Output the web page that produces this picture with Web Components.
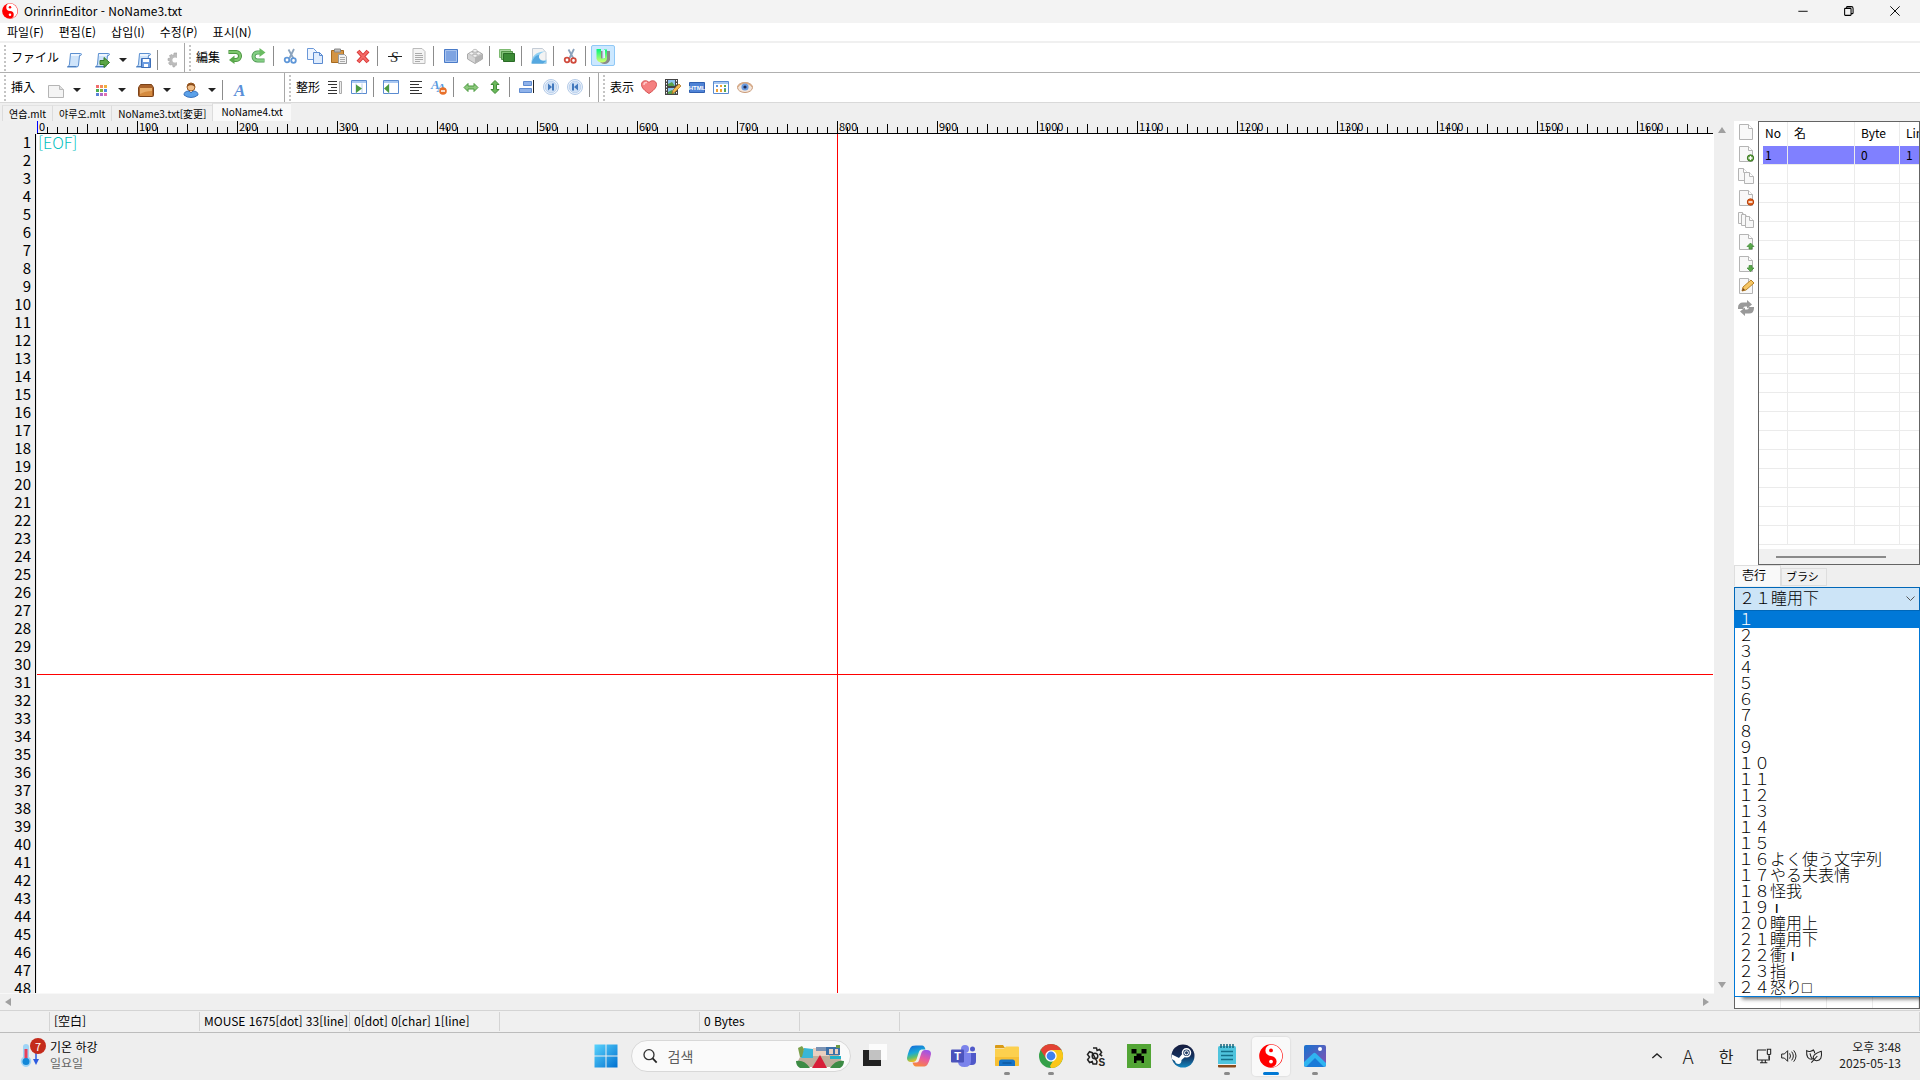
<!DOCTYPE html>
<html lang="ko">
<head>
<meta charset="utf-8">
<title>OrinrinEditor</title>
<style>
    html, body { height: 100%; }

    body {
        margin: 0;
        display: flex;
        flex-direction: column;
        overflow: hidden;
        background: #efefef;
        color: #000;
        font: 12px/16px "Noto Sans CJK KR", "Noto Sans", sans-serif;
    }

    .rebar-row {
        display: flex;
        height: 29px;
        background: #fff;
        border-bottom: 1px solid #b0b0b0;
    }

    .rebar-row.last { border-bottom-color: #d9d9d9; }

    main {
        flex: 1;
        min-height: 0;
        display: flex;
    }
</style>
</head>
<body>
    <title-bar caption="OrinrinEditor - NoName3.txt"></title-bar>
    <menu-bar items="파일(F),편집(E),삽입(I),수정(P),표시(N)"></menu-bar>

    <div class="rebar-row">
        <tool-band label="ファイル" style="width: 185px; --label: 51px; --drop: 4px">
            <tool-item icon="scroll"></tool-item>
            <tool-item icon="scrollGo" drop></tool-item>
            <tool-item icon="scrollSave"></tool-item>
            <tool-sep></tool-sep>
            <tool-item icon="gear" cut></tool-item>
        </tool-band>
        <tool-band label="編集" class="open" style="flex: 1; --label: 27px">
            <tool-item icon="undo"></tool-item>
            <tool-item icon="redo"></tool-item>
            <tool-sep></tool-sep>
            <tool-item icon="cut"></tool-item>
            <tool-item icon="copy"></tool-item>
            <tool-item icon="paste"></tool-item>
            <tool-item icon="del"></tool-item>
            <tool-sep></tool-sep>
            <tool-item icon="strike"></tool-item>
            <tool-item icon="page"></tool-item>
            <tool-sep></tool-sep>
            <tool-item icon="square"></tool-item>
            <tool-item icon="brick"></tool-item>
            <tool-sep></tool-sep>
            <tool-item icon="layers"></tool-item>
            <tool-sep></tool-sep>
            <tool-item icon="curl"></tool-item>
            <tool-sep></tool-sep>
            <tool-item icon="cutRed"></tool-item>
            <tool-sep></tool-sep>
            <tool-item icon="uni" on></tool-item>
        </tool-band>
    </div>

    <div class="rebar-row last">
        <tool-band label="挿入" style="width: 285px; --label: 29px; --drop: 4px">
            <tool-item icon="blank" drop></tool-item>
            <tool-item icon="dots" drop></tool-item>
            <tool-item icon="box" drop></tool-item>
            <tool-item icon="person" drop></tool-item>
            <tool-sep></tool-sep>
            <tool-item icon="fontA"></tool-item>
        </tool-band>
        <tool-band label="整形" style="width: 314px; --label: 27px; --drop: 1px">
            <tool-item icon="alignBar"></tool-item>
            <tool-item icon="panelR"></tool-item>
            <tool-sep></tool-sep>
            <tool-item icon="panelL"></tool-item>
            <tool-item icon="align"></tool-item>
            <tool-item icon="fontDel"></tool-item>
            <tool-sep></tool-sep>
            <tool-item icon="arrowH"></tool-item>
            <tool-item icon="arrowV"></tool-item>
            <tool-sep></tool-sep>
            <tool-item icon="alignRight"></tool-item>
            <tool-item icon="next"></tool-item>
            <tool-item icon="prev"></tool-item>
            <tool-sep></tool-sep>
        </tool-band>
        <tool-band label="表示" class="open" style="flex: 1; --label: 27px; --drop: 1px">
            <tool-item icon="heart"></tool-item>
            <tool-item icon="film"></tool-item>
            <tool-item icon="html"></tool-item>
            <tool-item icon="calendar"></tool-item>
            <tool-item icon="eye"></tool-item>
        </tool-band>
    </div>

    <file-tabs names="연습.mlt,야루오.mlt,NoName3.txt[変更],NoName4.txt" selected="3"></file-tabs>

    <main>
        <text-editor lines="48">[EOF]</text-editor>
        <side-panel>
            <page-list slot="pages"></page-list>
            <line-picker slot="picker"></line-picker>
        </side-panel>
    </main>

    <status-bar></status-bar>
    <task-bar></task-bar>

<script>
    // ---------- icons ----------
    const paper = (x, y, w, h) => `<path d="M${x} ${y}h${w - 4}l4 4v${h - 4}h-${w}z" fill="#f8f8f8" stroke="#b4b4b4"/><path d="M${x + w - 4} ${y}v4h4" fill="#fff" stroke="#b4b4b4"/>`;
    const scrollShape = '<path d="M4.500 1.500h10q1 0 1 1t-2 1l-1 9.500q0 2-2 2h-9q2-1 2-3z" fill="#cfe4fa" stroke="#5b8fd0"/><path d="M5 2h8v2H5z" fill="#eef6ff"/><path d="M1.500 14.500h9" stroke="#4d7fc0"/>';
    const scissors = c => `<path d="M11 1L6.500 10M5.500 1.500l5 9" stroke="#8ba3bd" stroke-width="1.800"/><circle cx="4" cy="12" r="2.300" fill="none" stroke="${c}" stroke-width="1.800"/><circle cx="10.500" cy="12.500" r="2.300" fill="none" stroke="${c}" stroke-width="1.800"/>`;
    const round = d => `<circle cx="8" cy="8" r="7.500" fill="#f2f6fc" stroke="#b4cbe8"/><circle cx="8" cy="8" r="5.800" fill="#cfe0f5" stroke="#bdd3ef"/><path d="${d}" fill="#4379bd"/>`;
    const yinyang = '<circle cx="12" cy="12" r="11.800" fill="#f00"/><path d="M12 .8A5.600 5.600 0 0 0 12 12A5.600 5.600 0 0 1 12 23.200A11.200 11.200 0 0 0 12 .8z" fill="#fff"/><circle cx="12" cy="6.400" r="1.900" fill="#f00"/><circle cx="12" cy="17.600" r="1.900" fill="#fff"/>';

    const ICONS = {
        scroll: scrollShape,
        scrollGo: scrollShape + '<path d="M6 8.500h4V5.500l5.500 5-5.500 5v-3H6z" fill="#5aa545" stroke="#357a2a"/>',
        scrollSave: scrollShape + '<path d="M6.500 6.500h9v9h-9z" fill="#6c9ce0" stroke="#3e6fb8"/><path d="M8 7h6v3H8zM9 12h4v3H9z" fill="#fff"/>',
        gear: '<path d="M7 1h3l.5 2.500 2.500-1 2 2.500-2 2 2 1v2l-2.500.5 1 2.500-2.500 1.500-2-2-1.500 2.500H6L5.500 12.500 3 13l-1.500-2 2-2L1 8.500V6.500L3.500 6l-1-2.500L5 2.500l1.500 1.500z" fill="#bcbcbc" stroke="#a2a2a2" stroke-width=".6"/><circle cx="8" cy="8" r="2.600" fill="#fff"/>',
        undo: '<path d="M1.500 4h7.500a4 4 0 0 1 0 8H6.500" fill="none" stroke="#3f8a35" stroke-width="4"/><path d="M2 4h7a4 4 0 0 1 0 8H6.500" fill="none" stroke="#7cc66c" stroke-width="2.400"/><path d="M7.500 7.500v8.500l-5.500-4z" fill="#5aa84c"/>',
        redo: '<path d="M13.500 12.500H6.500a4 4 0 0 1 0-8H9" fill="none" stroke="#4b9450" stroke-width="4"/><path d="M13 12.500H6.500a4 4 0 0 1 0-8H9" fill="none" stroke="#84cf84" stroke-width="2.400"/><path d="M8.500 0v9L14.500 4.500z" fill="#6abb62"/>',
        cut: scissors('#5f97d8'),
        cutRed: scissors('#d04a3c'),
        copy: '<path d="M.5.500h6l3 3v8h-9z" fill="#eef5ff" stroke="#6b98d8"/><path d="M6.500 4.500h6l3 3v8h-9z" fill="#dfecfd" stroke="#5a8ad0"/><path d="M12.500 4.500v3h3" fill="none" stroke="#5a8ad0"/>',
        paste: '<path d="M.5 2.500h12v12H.5z" fill="#d39444" stroke="#a66a1f"/><path d="M3.500 1h6v3h-6z" fill="#bbb" stroke="#888"/><path d="M7.500 6.500h6l2 2v7h-8z" fill="#f2f2f2" stroke="#999"/><path d="M9 9.500h5M9 11.500h5M9 13.500h5" stroke="#aaa"/>',
        del: '<path d="M3 3l10 11M13 3l-10 11" stroke="#d83636" stroke-width="4"/><path d="M3.500 3.500l9 10M12.500 3.500l-9 10" stroke="#f46a66" stroke-width="2"/>',
        strike: '<text x="3.500" y="13.500" font-family="Liberation Serif, serif" font-size="15" font-style="italic" fill="#222">S</text><path d="M1 8.500h14" stroke="#222"/>',
        page: '<path d="M2 .5h9l3 3v12H2z" fill="#f4f4f4" stroke="#bbb"/><path d="M4 5.500h7M4 7.500h8M4 9.500h8M4 11.500h8M4 13.500h5" stroke="#aaa"/>',
        square: '<path d="M1.500 1.500h13v13h-13z" fill="#7ea4e2" stroke="#4a7bc8"/><path d="M2.500 2.500h11v11h-11z" fill="none" stroke="#a9c4ee"/>',
        brick: '<path d="M.5 6L8 2l7.500 4v5L8 15.500.5 11z" fill="#d4d4d4" stroke="#aaa"/><path d="M8 9.500v6l7.500-4.500V6z" fill="#b4b4b4"/><ellipse cx="4.500" cy="5.500" rx="2.200" ry="1.500" fill="#f0f0f0" stroke="#a4a4a4" stroke-width=".6"/><ellipse cx="11.500" cy="5.500" rx="2.200" ry="1.500" fill="#f0f0f0" stroke="#a4a4a4" stroke-width=".6"/><ellipse cx="8" cy="2.800" rx="2.200" ry="1.500" fill="#f0f0f0" stroke="#a4a4a4" stroke-width=".6"/><ellipse cx="8" cy="7.800" rx="2.200" ry="1.500" fill="#f0f0f0" stroke="#a4a4a4" stroke-width=".6"/>',
        layers: '<path d="M.5 1.500h11v8H.5z" fill="#a9d69f" stroke="#7ebb72"/><path d="M2.500 3.500h11v8h-11z" fill="#7fbf74" stroke="#55974a"/><path d="M4.500 5.500h11v8h-11z" fill="#3b8a35" stroke="#2a6b26"/>',
        curl: '<path d="M1.500.5h10l3.500 4v11H1.500z" fill="#f3f3f3" stroke="#c4ccd6"/><path d="M15.500 3.500C9 4 7 8 8.500 10.500S13 13 15.500 11.500v4H.5C0 8 6 2.500 15.500 3.500z" fill="#8fcff2"/><path d="M.5 15.500C2 10 5 7 8 7q-.5 3 1 4.500T15 13l-3 2.500z" fill="#55a8e0"/>',
        uni: '<path d="M4 3h3.500v8q2 1.500 3.500 0V3h4v9q-1.500 4-5.500 4t-5.500-4z" fill="#8a8a8a"/><path d="M1.500 1h4.500v9q1.500 1.500 3 0V1.500h3V11q-1 3.500-5 3.500T1.500 11z" fill="url(#u)"/><path d="M9.500 2v8" stroke="#eef"/><defs><linearGradient id="u" x2="0" y2="1"><stop stop-color="#00f57a"/><stop offset="1" stop-color="#d4ff70"/></linearGradient></defs>',
        blank: '<path d="M.5 3.500h11l4 4v8H.5z" fill="#f4f4f4" stroke="#b5b5b5"/><path d="M11.500 3.500v4h4" fill="#ddd" stroke="#bbb"/>',
        dots: ['#f26d6d', '#f58a5c', '#f0b040', '#4caf50', '#7cb342', '#4f8be0', '#5a7fd8', '#b06ac8', '#e070b0'].map((c, i) => `<rect x="${3 + i % 3 * 4}" y="${3 + Math.floor(i / 3) * 4}" width="3" height="3" fill="${c}"/>`).join(''),
        box: '<path d="M2.500 2.500h11l2 3v8q0 1-1 1h-13q-1 0-1-1v-8z" fill="#a9622a" stroke="#7c4318"/><path d="M2 6h12v8H2z" fill="#d58b3f"/><path d="M2 6h12v3q-7 0-12 3z" fill="#e7ad6a"/>',
        person: '<circle cx="8" cy="5" r="4" fill="#f0bf8a" stroke="#9a5a22"/><path d="M4 5C4 0 12 0 12 5 10 2.500 6 2.500 4 5z" fill="#8a4c1a"/><path d="M1 13q0-4 5-4l2 2 2-2q5 0 5 4-3 2.500-7 2.500T1 13z" fill="#5aa0e8" stroke="#3a72bb"/>',
        fontA: '<text x="2" y="14" font-family="Liberation Serif, serif" font-size="17" font-weight="700" font-style="italic" fill="#5a8fd8">A</text>',
        alignBar: '<path d="M1 2.500h9M1 5.500h9M4 8.500h6M1 11.500h9M1 14.500h9" stroke="#333"/><path d="M12.500 2.500h2v12h-2z" fill="#eee" stroke="#aaa"/>',
        panelR: '<path d="M.5 1.500h15v13H.5z" fill="#fff" stroke="#5a8bd0"/><path d="M1 2h14v2H1z" fill="#a9c8f2"/><path d="M5 4.500v10M11 4.500v10" stroke="#b9cfec"/><path d="M5 5.500l6 4-6 4.500z" fill="#4a9a3f"/>',
        panelL: '<path d="M.5 1.500h15v13H.5z" fill="#fff" stroke="#5a8bd0"/><path d="M1 2h14v2H1z" fill="#a9c8f2"/><path d="M6 4.500v10" stroke="#b9cfec"/><path d="M6 5v9L1 9.500z" fill="#4a9a3f"/>',
        align: '<path d="M3 2.500h12M3 5.500h9M3 8.500h12M3 11.500h9M3 14.500h12" stroke="#333"/>',
        fontDel: '<text x="0" y="10" font-family="Liberation Serif, serif" font-size="13" font-weight="700" font-style="italic" fill="#5a9be0">A</text><text x="6" y="13" font-family="Liberation Serif, serif" font-size="13" font-weight="700" font-style="italic" fill="#5a9be0">A</text><circle cx="12" cy="12" r="3.800" fill="#e8702a"/><path d="M10 12h4" stroke="#fff" stroke-width="1.500"/>',
        arrowH: '<path d="M1 8.500l4-4v2.500h6V4.500l4 4-4 4v-2.500H5v2.500z" fill="#8cc87c" stroke="#4a9a3f"/>',
        arrowV: '<path d="M8 1.500l4 4H9.500v5H12l-4 4-4-4h2.500v-5H4z" fill="#6ab85a" stroke="#3f8a35"/>',
        alignRight: '<path d="M4.500 2.500h8v4h-8zM.5 9.500h12v4H.5z" fill="#8fb2ea" stroke="#5f8bd0"/><path d="M14.500 1v13" stroke="#222"/>',
        next: round('M5 4.500L9 8l-4 3.500zM9 4.500h2v7H9z'),
        prev: round('M11 4.500L7 8l4 3.500zM5 4.500h2v7H5z'),
        heart: '<path d="M8 14.500C1 10 .5 7 .5 5.500c0-4 5-5 7.500-2 2.500-3 7.500-2 7.500 2 0 1.500-.5 4.500-7.500 9z" fill="#f58080" stroke="#d65050"/><path d="M3 6q0-3 3-2.500" fill="none" stroke="#fcc" stroke-width="1.500"/>',
        film: '<path d="M0 0h13v16H0z" fill="#444"/><path d="M3 1h7v6H3zM3 9h7v6H3z" fill="#8cc1ee"/><path d="M3 5l4-2 3 4H3zM3 13l4-2 3 4H3z" fill="#57a04a"/><path d="M1.500 1v15M11.500 1v15" stroke="#fff" stroke-dasharray="1.500 1.500"/><path d="M7 15l1-4 6-6 2 2-6 6z" fill="#f2b950" stroke="#a8691a" stroke-width=".7"/>',
        html: '<path d="M.5 3.500h15v10H.5z" fill="#4f83d6" stroke="#2f5fb0"/><text x="8" y="11" text-anchor="middle" font-family="Liberation Sans, sans-serif" font-size="6" font-weight="700" fill="#fff">HTML</text>',
        calendar: '<path d="M.5 2.500h15v12H.5z" fill="#fff" stroke="#5a8bd0"/><path d="M1 3h14v2H1z" fill="#a9c8f2"/><path d="M3 6h2v2H3zM11 9h2v1h-2z" fill="#5a93dd"/><path d="M7 6h2v2H7zM3 10h2v3H3zM7 10h2v3H7z" fill="#f0a030"/><path d="M11 6h2v2h-2zM11 10h2v3h-2z" fill="#5aa84c"/>',
        eye: '<ellipse cx="8" cy="8.500" rx="7.500" ry="5" fill="#f3e6dc" stroke="#c99a78"/><path d="M.5 8C4 2.500 12 2.500 15.500 8" fill="none" stroke="#d6aa88" stroke-width="1.500"/><circle cx="8" cy="8" r="3.600" fill="#6a9be0"/><circle cx="8" cy="8" r="1.600" fill="#1d2a55"/>',
        paper: paper(1.5, 0.5, 13, 15),
        paperAdd: paper(1.5, 0.5, 13, 15) + '<circle cx="12.500" cy="12" r="3.200" fill="#5f9f3f" stroke="#3f7a25"/><path d="M12.500 10v4M10.500 12h4" stroke="#fff" stroke-width="1.300"/>',
        paper2: paper(.5, .5, 9, 12) + paper(6.500, 4.500, 9, 11),
        paperDel: paper(1.5, 0.5, 13, 15) + '<circle cx="12.500" cy="12" r="3.200" fill="#e0601c" stroke="#b8430c"/><path d="M10.500 12h4" stroke="#fff" stroke-width="1.500"/>',
        paper3: paper(.5, .5, 8, 11) + paper(3.5, 2.5, 8, 11) + paper(7.500, 4.500, 8, 11),
        paperUp: paper(1.5, 0.5, 13, 15) + '<path d="M12.500 9l3.500 3.500h-2V15h-3v-2.500H9z" fill="#5aa84c" stroke="#3f8a35" stroke-width=".7"/>',
        paperDown: paper(1.5, 0.5, 13, 15) + '<path d="M12.500 15.500L16 12h-2V9.500h-3V12H9z" fill="#5aa84c" stroke="#3f8a35" stroke-width=".7"/>',
        paperEdit: paper(1.5, 0.5, 13, 15) + '<path d="M4 13l1-4 8-7 3 3-8 7z" fill="#f6c664" stroke="#b88226"/><path d="M4 13l1-3 2 2z" fill="#7a4a20"/>',
        refresh: '<path d="M0 8q0-5.500 5-5.500h4V0l5 4.500L9 8.500V6.500H7Q5 6.500 5.500 9H0zM16 8q0 5.500-5 5.500H7V16l-5-4.500L7 7.500v2h2q2 0 1.500-2.500H16z" fill="#999"/>',

        // window and task bar, 24x24
        yinyang,
        min: '<path d="M4 12.500h16" stroke="#000" stroke-width="1.600"/>',
        restore: '<path d="M4.500 8.500q0-1 1-1h9q1 0 1 1v10q0 1-1 1h-9q-1 0-1-1zM8 7V5.500q0-1 1-1h7q3 0 3 3v8q0 1-1 1h-2" fill="none" stroke="#000" stroke-width="1.800"/>',
        close: '<path d="M4 4l16 16M20 4L4 20" stroke="#000" stroke-width="1.600"/>',
        win: '<defs><linearGradient id="w" x2="1" y2="1"><stop stop-color="#5ad4fd"/><stop offset="1" stop-color="#0070d0"/></linearGradient></defs><path d="M.5.500h11v11H.5zM12.500.5h11v11h-11zM.5 12.500h11v11H.5zM12.500 12.500h11v11h-11z" fill="url(#w)"/>',
        search: '<circle cx="10.500" cy="10" r="7.500" fill="none" stroke="#333" stroke-width="2"/><path d="M16 15.500l6 6.500" stroke="#222" stroke-width="2.600"/>',
        taskview: '<path d="M0 6h18v16H0z" fill="#222"/><path d="M6 0h18v16H6z" fill="#fff" fill-opacity=".8"/><path d="M6 6h12v10H6z" fill="#c2c2c2"/>',
        copilot: '<defs><linearGradient id="ca" x1="0" y1="0" x2=".3" y2="1"><stop stop-color="#1565d8"/><stop offset=".5" stop-color="#18a8d8"/><stop offset=".75" stop-color="#5fc070"/><stop offset="1" stop-color="#f4c020"/></linearGradient><linearGradient id="cb" x1=".7" y1="0" x2=".3" y2="1"><stop stop-color="#9a55e8"/><stop offset=".5" stop-color="#e85aa0"/><stop offset="1" stop-color="#f88a3a"/></linearGradient></defs><path d="M9 1.500h6q2.500 0 3.500 4h-4q-2 0-2.600 2.500L10 14q-1 4-4 4H4q-4 0-4-4Q2 4 5 2q1-.5 4-.5z" fill="url(#ca)"/><path d="M15 22.500H9q-2.500 0-3.500-4h4q2 0 2.600-2.500L14 10q1-4 4-4h2q4 0 4 4-2 10-5 12-1 .5-4 .5z" fill="url(#cb)"/>',
        teams: '<circle cx="14" cy="5" r="4" fill="#7b83eb"/><circle cx="21.500" cy="5" r="2.500" fill="#5059c9"/><path d="M17 9h8v8q0 4-4 4h-4z" fill="#5059c9"/><path d="M7 9h13v8q0 6-6.500 6T7 17z" fill="#7b83eb"/><rect y="5.500" width="13" height="13" rx="1" fill="#4b53bc"/><text x="6.500" y="16" text-anchor="middle" font-family="Liberation Sans, sans-serif" font-size="11" font-weight="700" fill="#fff">T</text>',
        folder: '<path d="M0 2q0-1 1-1h7l2 3H0z" fill="#d99a16"/><path d="M0 4.500h9l2-2h12q1 0 1 1V21q0 1-1 1H1q-1 0-1-1z" fill="#fcd04e"/><path d="M0 13h24v8q0 1-1 1H1q-1 0-1-1z" fill="#f7c035"/><path d="M4 22v-4q0-2.500 2.500-2.500h11Q20 15.500 20 18v4z" fill="#1673c8"/><path d="M7.500 19h9" stroke="#0d5296" stroke-width="1.200"/>',
        chrome: '<circle cx="12" cy="12" r="12" fill="#34a048"/><path d="M22.400 6A12 12 0 0 1 12 24l-1-2 6-10-5-6z" fill="#fbc618"/><path d="M1.600 6A12 12 0 0 1 22.400 6H12L7 14.500z" fill="#e34234"/><circle cx="12" cy="12" r="5.700" fill="#fff"/><circle cx="12" cy="12" r="4.400" fill="#3f80ee"/>',
        cog: '<path d="M10 4h3.500l.6 2.500 2.500-1 2 2.700-1.700 2.300 2.300 1.500M14 17.500L13.500 20H10l-.8-2.500-2.600 1-2-2.800L6.500 13 4.500 10.500l2-2.800 2.700 1z" fill="none" stroke="#222" stroke-width="1.500"/><circle cx="12" cy="12" r="2.800" fill="none" stroke="#222" stroke-width="1.500"/><text x="15.500" y="21.500" font-family="Liberation Sans, sans-serif" font-size="10" font-weight="700" fill="#222">S</text>',
        creeper: '<path d="M0 0h24v24H0z" fill="#52a535"/><path d="M4.500 5h5v4.500h-5zM14.500 5h5v4.500h-5zM9.500 9.500h5V12H17v7h-2.500v-2.500h-5V19H7v-7h2.500z" fill="#000"/>',
        steam: '<defs><linearGradient id="s" x2="0" y2="1"><stop stop-color="#151b3d"/><stop offset=".5" stop-color="#152f5c"/><stop offset="1" stop-color="#1387c0"/></linearGradient></defs><circle cx="12" cy="12" r="11.500" fill="url(#s)"/><path d="M1 10.500l7 3.500 4-5 3 3-4.500 4q0 4-3 4-3 0-3.500-3L.8 15z" fill="#fff"/><circle cx="15.500" cy="8.800" r="4" fill="#24406a" stroke="#fff" stroke-width="1.500"/><circle cx="15.500" cy="8.800" r="2" fill="none" stroke="#fff"/>',
        notepad: '<rect x="3" y="2" width="18" height="20" rx="1.500" fill="#4fc4dd"/><path d="M3 20h18v2.500q0 1-1 1H4q-1 0-1-1z" fill="#8a4a1a"/><path d="M3 20h18v1H3z" fill="#eee"/><path d="M6 0v4M9 0v4M12 0v4M15 0v4M18 0v4" stroke="#15637a" stroke-width="1.500"/><path d="M6 7.500h12M6 11.500h12M6 15.500h12" stroke="#14708a" stroke-width="1.500"/>',
        photos: '<defs><linearGradient id="p" x2="1" y2="1"><stop stop-color="#1673d0"/><stop offset="1" stop-color="#8a50b0"/></linearGradient></defs><rect x="1" y="1" width="22" height="22" rx="2" fill="url(#p)"/><path d="M1 18L10 9.500q1.500-1.500 3 0L23 19v2q0 2-2 2H3q-2 0-2-2z" fill="#2fb4f0"/><path d="M3 23l9-9 9 9z" fill="#1a7ad8"/><circle cx="17" cy="5" r="2" fill="#fff"/>',
        thermo: '<path d="M3 4q0-3 3-3t3 3v10q3 2 2 6-2 4-5 4t-5-4q-1-4 2-6z" fill="#9fd4f6"/><path d="M6 6v12" stroke="#e8405a" stroke-width="3"/><circle cx="6" cy="18.500" r="3.500" fill="#1287d8"/><path d="M16 10v8" stroke="#2d5be0" stroke-width="1.500"/><path d="M13 16h6l-3 6z" fill="#2d5be0"/>',
        up: '<path d="M5 15l7-6 7 6" fill="none" stroke="#222" stroke-width="2"/>',
        net: '<path d="M15 3H3q-1 0-1 1v13q0 1 1 1h17v-6M6 22h11M9 18v4M14 18v4" fill="none" stroke="#222" stroke-width="1.600"/><path d="M17 2h5v7q-2.500 2-5 0zM19.500 10v7" fill="#eee" stroke="#222" stroke-width="1.600"/>',
        sound: '<path d="M1 9h4l5-5v16l-5-5H1z" fill="none" stroke="#222" stroke-width="1.500"/><path d="M13 8q2.500 4 0 8M16 5.500q5 6.500 0 13M19 3.500q7 8.500 0 17" fill="none" stroke="#222" stroke-width="1.500"/>',
        leaf: '<path d="M9 17Q0 17 1 4q3 2 6 1t4-2q2 2 2 5M6 8q1 6 4 9M23 5q2 14-7 14-6-1-5-6 2-5 12-8zM8 22l9-10" fill="none" stroke="#222" stroke-width="1.600"/>',
        promo: '<path d="M6 9h36l4 9-2 5H4l-2-6z" fill="#bfae9c"/><path d="M8 4l9 1v9H5z" fill="#38b6d6"/><path d="M17 4h16v8H17z" fill="#e9cfc0"/><path d="M30 3h14v8H30z" fill="#3b70a8"/><path d="M33 5h4v5h-4zM39 5h3v5h-3z" fill="#e9cfc0"/><path d="M34 12h11v3H34z" fill="#1fb0c8"/><path d="M20 3h10v4H20z" fill="#7b93b4"/><path d="M24 11l7 13H16z" fill="#d81e38"/><path d="M0 17q8-2 14 7H4q-4-2-4-7zM48 17q-8-2-14 7h10q4-2 4-7z" fill="#3d8b45"/><path d="M2 4l4-2 2 3-2 8H4z" fill="#7aa04a"/><path d="M40 1h4v3h-4z" fill="#6d9a46"/>'
    };

    class UiIcon extends HTMLElement {
        constructor() {
            super();
            this.attachShadow({ mode: 'open' });
        }

        connectedCallback() {
            const box = this.getAttribute('box') || '16 16';
            this.shadowRoot.innerHTML = `
                <style>
                    :host { display: block; width: 16px; height: 16px; flex: none; }
                    svg { display: block; width: 100%; height: 100%; overflow: visible; }
                </style>
                <svg viewBox="0 0 ${box}" fill="none" aria-hidden="true">${ICONS[this.getAttribute('name')]}</svg>`;
        }
    }
    customElements.define('ui-icon', UiIcon);

    // ---------- title and menu ----------
    class TitleBar extends HTMLElement {
        constructor() {
            super();
            this.attachShadow({ mode: 'open' });
        }

        connectedCallback() {
            this.shadowRoot.innerHTML = `
                <style>
                    :host {
                        display: flex;
                        align-items: center;
                        box-sizing: border-box;
                        height: 23px;
                        padding: 0 2px 2px;
                        background: #f3f3f3;
                    }
                    .logo { margin-right: 6px; }
                    span { flex: 1; }
                    button {
                        width: 46px;
                        height: 20px;
                        border: 0;
                        padding: 0;
                        background: none;
                        display: grid;
                        place-items: center;
                    }
                    button ui-icon { width: 14px; height: 14px; }
                </style>
                <ui-icon class="logo" name="yinyang" box="24 24"></ui-icon>
                <span>${this.getAttribute('caption')}</span>
                <button aria-label="최소화"><ui-icon name="min" box="24 24"></ui-icon></button>
                <button aria-label="복원"><ui-icon name="restore" box="24 24"></ui-icon></button>
                <button aria-label="닫기"><ui-icon name="close" box="24 24"></ui-icon></button>`;
        }
    }
    customElements.define('title-bar', TitleBar);

    class MenuBar extends HTMLElement {
        constructor() {
            super();
            this.attachShadow({ mode: 'open' });
        }

        connectedCallback() {
            const items = this.getAttribute('items').split(',');
            this.shadowRoot.innerHTML = `
                <style>
                    :host {
                        display: flex;
                        height: 18px;
                        background: #fff;
                        border-bottom: 2px solid #f0f0f0;
                    }
                    button {
                        border: 0;
                        padding: 0 8px 0 7px;
                        background: none;
                        font: inherit;
                        color: inherit;
                        line-height: 18px;
                    }
                </style>
                ${items.map(t => `<button>${t}</button>`).join('')}`;
        }
    }
    customElements.define('menu-bar', MenuBar);

    // ---------- tool bands ----------
    class ToolBand extends HTMLElement {
        constructor() {
            super();
            this.attachShadow({ mode: 'open' });
        }

        connectedCallback() {
            this.shadowRoot.innerHTML = `
                <style>
                    :host {
                        display: flex;
                        box-sizing: border-box;
                        overflow: hidden;
                        border-right: 1px solid #a8a8a8;
                        font-family: "Noto Sans CJK JP", sans-serif;
                    }
                    :host(.open) { border-right: 0; }
                    .grip {
                        width: 2px;
                        margin: 2px 5px 1px 4px;
                        background: repeating-linear-gradient(#c4c4c4 0 2px, #fff 2px 4px);
                    }
                    .label {
                        width: var(--label);
                        flex: none;
                        line-height: 27px;
                        white-space: nowrap;
                    }
                    .tools {
                        display: flex;
                        align-items: flex-start;
                        padding-top: var(--drop, 0);
                    }
                </style>
                <div class="grip"></div>
                <div class="label">${this.getAttribute('label')}</div>
                <div class="tools"><slot></slot></div>`;
        }
    }
    customElements.define('tool-band', ToolBand);

    class ToolItem extends HTMLElement {
        constructor() {
            super();
            this.attachShadow({ mode: 'open' });
        }

        connectedCallback() {
            const name = this.getAttribute('icon');
            this.shadowRoot.innerHTML = `
                <style>
                    :host { display: flex; flex: none; }
                    :host([cut]) { width: 14px; overflow: hidden; }
                    button {
                        box-sizing: border-box;
                        display: flex;
                        align-items: center;
                        justify-content: center;
                        flex: none;
                        width: 24px;
                        height: 26px;
                        padding: 0;
                        border: 0;
                        background: none;
                    }
                    :host([drop]) button { width: 45px; padding-left: 4px; gap: 9px; }
                    :host([on]) button {
                        height: 21px;
                        margin-top: 2px;
                        border: 1px solid #90c8f6;
                        border-radius: 2px;
                        background: #cce8ff;
                    }
                    i {
                        border: 4px solid transparent;
                        border-top-color: #222;
                        border-bottom: 0;
                    }
                </style>
                <button aria-label="${name}">
                    <ui-icon name="${name}"></ui-icon>
                    ${this.hasAttribute('drop') ? '<i></i>' : ''}
                </button>`;
        }
    }
    customElements.define('tool-item', ToolItem);

    class ToolSep extends HTMLElement {
        constructor() {
            super();
            this.attachShadow({ mode: 'open' });
            this.shadowRoot.innerHTML = `
                <style>
                    :host { display: block; width: 8px; flex: none; }
                    div { width: 1px; height: 20px; margin: 3px 0 0 2px; background: #8c8c8c; }
                </style>
                <div></div>`;
        }
    }
    customElements.define('tool-sep', ToolSep);

    // ---------- document tabs ----------
    class FileTabs extends HTMLElement {
        constructor() {
            super();
            this.attachShadow({ mode: 'open' });
        }

        connectedCallback() {
            const sel = Number(this.getAttribute('selected'));
            const names = this.getAttribute('names').split(',');
            this.shadowRoot.innerHTML = `
                <style>
                    :host {
                        display: flex;
                        align-items: flex-end;
                        height: 18px;
                        padding-left: 2px;
                        font: 10px/14px "Noto Sans CJK JP", "Noto Sans CJK KR", sans-serif;
                    }
                    button {
                        box-sizing: border-box;
                        height: 16px;
                        padding: 0 6px;
                        border: 0;
                        border-left: 1px solid #dcdcdc;
                        border-top: 1px solid #e2e2e2;
                        background: #f0f0f0;
                        font: inherit;
                        color: inherit;
                        white-space: nowrap;
                    }
                    button.on {
                        height: 18px;
                        padding: 0 8px 2px;
                        background: #f9f9f9;
                    }
                </style>
                ${names.map((n, i) => `<button class="${i === sel ? 'on' : ''}">${n}</button>`).join('')}`;
        }
    }
    customElements.define('file-tabs', FileTabs);

    // ---------- editor with ruler and gutter ----------
    class TextEditor extends HTMLElement {
        constructor() {
            super();
            this.attachShadow({ mode: 'open' });
        }

        connectedCallback() {
            const lines = Number(this.getAttribute('lines'));
            const nums = Array.from({ length: lines }, (_, i) => `<div>${i + 1}</div>`).join('');
            const marks = Array.from({ length: 17 }, (_, i) => `<span>${i * 100}</span>`).join('');
            this.shadowRoot.innerHTML = `
                <style>
                    :host {
                        flex: 1;
                        min-width: 0;
                        display: grid;
                        grid-template: 13px 1fr 17px / 37px 1fr 20px;
                        background: #efefef;
                    }
                    .ruler {
                        grid-column: 2;
                        display: flex;
                        overflow: hidden;
                        margin-right: 1px;
                        font: 11px/10px "Liberation Sans Narrow", "Noto Sans CJK JP", sans-serif;
                        border-bottom: 1px solid #000;
                        background:
                            linear-gradient(#00f, #00f) 0 0 / 1px 100% no-repeat,
                            repeating-linear-gradient(90deg, #000 0 1px, transparent 1px 100px) 0 0 / 100% 100%,
                            repeating-linear-gradient(90deg, #000 0 1px, transparent 1px 50px) 0 100% / 100% 9px no-repeat,
                            repeating-linear-gradient(90deg, #000 0 1px, transparent 1px 10px) 0 100% / 100% 6px no-repeat,
                            #efefef;
                    }
                    .ruler span { width: 98px; padding-left: 2px; flex: none; }
                    .gutter {
                        grid-row: 2;
                        grid-column: 1;
                        overflow: hidden;
                        border-right: 1px solid #000;
                        margin-right: 1px;
                        padding-right: 4px;
                        text-align: right;
                        font: 15px/16px "Liberation Sans Narrow", "Noto Sans CJK JP", sans-serif;
                    }
                    .gutter div { height: 18px; }
                    .page {
                        grid-row: 2;
                        grid-column: 2;
                        position: relative;
                        overflow: hidden;
                        background: #fff;
                        padding-left: 1px;
                        font: 16px/16px "Noto Sans CJK JP", sans-serif;
                        font-weight: 300;
                        color: #00c0c0;
                    }
                    /* guides at dot 800 and below line 30 */
                    .guide { position: absolute; background: #f00; }
                    .guide.v { left: 800px; top: 0; bottom: 0; width: 1px; }
                    .guide.h { top: 540px; left: 0; right: 1px; height: 1px; }
                    .vbar {
                        grid-area: 1 / 3 / 3 / 4;
                        display: flex;
                        flex-direction: column;
                        align-items: center;
                        justify-content: space-between;
                        padding: 6px 4px 5px 0;
                    }
                    .hbar {
                        grid-area: 3 / 1 / 4 / 3;
                        display: flex;
                        align-items: center;
                        justify-content: space-between;
                        padding: 0 5px 0 5px;
                        border-top: 1px solid #f8f8f8;
                    }
                    i { border: 4px solid transparent; }
                    .up { border-bottom: 6px solid #a0a0a0; border-top: 0; }
                    .down { border-top: 6px solid #a0a0a0; border-bottom: 0; }
                    .left { border-right: 6px solid #a0a0a0; border-left: 0; }
                    .right { border-left: 6px solid #a0a0a0; border-right: 0; }
                </style>
                <div class="ruler">${marks}</div>
                <div class="gutter">${nums}</div>
                <div class="page"><slot></slot><div class="guide v"></div><div class="guide h"></div></div>
                <div class="vbar"><i class="up"></i><i class="down"></i></div>
                <div class="hbar"><i class="left"></i><i class="right"></i></div>`;
        }
    }
    customElements.define('text-editor', TextEditor);

    // ---------- right hand side ----------
    class SidePanel extends HTMLElement {
        constructor() {
            super();
            this.attachShadow({ mode: 'open' });
            this.shadowRoot.innerHTML = `
                <style>
                    :host {
                        width: 186px;
                        flex: none;
                        display: grid;
                        grid-template-rows: minmax(0, 444px) 1fr;
                        min-height: 0;
                    }
                </style>
                <slot name="pages"></slot>
                <slot name="picker"></slot>`;
        }
    }
    customElements.define('side-panel', SidePanel);

    class PageList extends HTMLElement {
        constructor() {
            super();
            this.attachShadow({ mode: 'open' });
        }

        connectedCallback() {
            const tools = ['paper', 'paperAdd', 'paper2', 'paperDel', 'paper3', 'paperUp', 'paperDown', 'paperEdit', 'refresh'];
            const empty = '<tr><td></td><td></td><td></td><td></td></tr>'.repeat(20);
            this.shadowRoot.innerHTML = `
                <style>
                    :host { display: flex; background: #fff; min-height: 0; overflow: hidden; }
                    .tools { width: 24px; flex: none; }
                    .tools button {
                        display: grid;
                        place-items: center;
                        width: 24px;
                        height: 22px;
                        padding: 0;
                        border: 0;
                        background: none;
                    }
                    .frame {
                        flex: 1;
                        min-width: 0;
                        display: flex;
                        flex-direction: column;
                        border: 1px solid #646464;
                    }
                    .view { flex: 1; min-height: 0; overflow: hidden; }
                    table {
                        width: 186px;
                        table-layout: fixed;
                        border-collapse: separate;
                        border-spacing: 0;
                    }
                    th, td {
                        box-sizing: border-box;
                        height: 19px;
                        padding: 0 5px 0 6px;
                        border-right: 1px solid #ebebeb;
                        border-bottom: 1px solid #ebebeb;
                        text-align: left;
                        font-weight: 400;
                        line-height: 18px;
                    }
                    th { height: 24px; padding-bottom: 2px; border-bottom: 0; line-height: 22px; }
                    tr.on td { background: #8080ff; }
                    tr.on td:first-child { padding-left: 2px; border-left: 4px solid #fff; }
                    .bar {
                        height: 15px;
                        background: #f0f0f0;
                        display: flex;
                        align-items: center;
                        padding: 0 33px 0 17px;
                    }
                    .bar i { flex: 1; height: 2px; background: #8a8a8a; }
                </style>
                <div class="tools">${tools.map(t => `<button aria-label="${t}"><ui-icon name="${t}"></ui-icon></button>`).join('')}</div>
                <div class="frame">
                    <div class="view">
                        <table>
                            <colgroup><col style="width: 29px"><col style="width: 67px"><col style="width: 45px"><col></colgroup>
                            <thead><tr><th>No</th><th>名</th><th>Byte</th><th>Line</th></tr></thead>
                            <tbody><tr class="on"><td>1</td><td></td><td>0</td><td>1</td></tr>${empty}</tbody>
                        </table>
                    </div>
                    <div class="bar"><i></i></div>
                </div>`;
        }
    }
    customElements.define('page-list', PageList);

    class LinePicker extends HTMLElement {
        constructor() {
            super();
            this.attachShadow({ mode: 'open' });
        }

        connectedCallback() {
            const names = { 16: 'よく使う文字列', 17: 'やる夫表情', 18: '怪我', 19: '\u00a0ı', 20: '瞳用上', 21: '瞳用下', 22: '衝\u00a0ı', 23: '指', 24: '怒り□' };
            const wide = n => String(n).replace(/\d/g, d => String.fromCharCode(d.charCodeAt(0) + 0xFEE0));
            const items = Array.from({ length: 24 }, (_, i) => wide(i + 1) + (names[i + 1] || ''));
            this.shadowRoot.innerHTML = `
                <style>
                    :host {
                        display: flex;
                        flex-direction: column;
                        min-height: 0;
                        padding-bottom: 1px;
                        font-family: "Noto Sans CJK JP", sans-serif;
                    }
                    .tabs {
                        display: flex;
                        align-items: flex-end;
                        height: 21px;
                        margin-bottom: 1px;
                    }
                    .tabs button {
                        box-sizing: border-box;
                        height: 18px;
                        padding: 0 7px 1px 4px;
                        border: 1px solid #dedede;
                        background: #f0f0f0;
                        font: inherit;
                        color: inherit;
                        font-size: 11px;
                        line-height: 15px;
                    }
                    .tabs button.on {
                        height: 21px;
                        padding: 0 14px 3px 7px;
                        border-bottom: 0;
                        background: #f9f9f9;
                        font-size: 12px;
                    }
                    .combo { position: relative; }
                    select {
                        display: block;
                        box-sizing: border-box;
                        width: 100%;
                        height: 24px;
                        margin: 0;
                        padding: 0 4px;
                        border: 1px solid #0067b8;
                        border-radius: 0;
                        outline: 0;
                        appearance: none;
                        background: #cce4f7;
                        color: #000;
                        font: 16px/20px "Liberation Sans", "Noto Sans CJK JP", sans-serif;
                        font-weight: 300;
                    }
                    .chev { position: absolute; right: 5px; top: 9px; width: 9px; height: 6px; }
                    .list {
                        position: absolute;
                        z-index: 1;
                        top: 24px;
                        left: 0;
                        right: 0;
                        margin: 0;
                        padding: 0;
                        list-style: none;
                        border: 1px solid #0078d7;
                        background: #fff;
                        box-shadow: 5px 5px 4px -3px rgba(0, 0, 0, .6);
                        font: 16px/16px "Liberation Sans", "Noto Sans CJK JP", sans-serif;
                        font-weight: 300;
                    }
                    .list li { height: 16px; padding-left: 3px; white-space: nowrap; }
                    .list li.on { background: #0078d7; color: #fff; }
                    .grid {
                        flex: 1;
                        border: 1px solid #646464;
                        background: repeating-linear-gradient(90deg, #fff 0 45px, #ebebeb 45px 46px);
                    }
                </style>
                <div class="tabs"><button class="on">壱行</button><button>ブラシ</button></div>
                <div class="combo">
                    <select aria-label="壱行">${items.map((t, i) => `<option${i === 20 ? ' selected' : ''}>${t}</option>`).join('')}</select>
                    <svg class="chev" viewBox="0 0 9 6"><path d="M.5.5l4 4 4-4" fill="none" stroke="#555"/></svg>
                    <ul class="list" role="listbox">${items.map((t, i) => `<li role="option" class="${i ? '' : 'on'}">${t}</li>`).join('')}</ul>
                </div>
                <div class="grid"></div>`;
        }
    }
    customElements.define('line-picker', LinePicker);

    // ---------- status bar ----------
    class StatusBar extends HTMLElement {
        constructor() {
            super();
            this.attachShadow({ mode: 'open' });
            const cells = [[50, ''], [150, '[空白]'], [150, 'MOUSE 1675[dot] 33[line]'], [150, '0[dot] 0[char] 1[line]'], [200, ''], [100, '0 Bytes'], [100, '']];
            this.shadowRoot.innerHTML = `
                <style>
                    :host {
                        display: flex;
                        height: 21px;
                        border-top: 1px solid #d4d4d4;
                        border-bottom: 1px solid #bcbcbc;
                        background: #f0f0f0;
                    }
                    div {
                        box-sizing: border-box;
                        margin: 1px 0;
                        padding-left: 4px;
                        border-right: 1px solid #d4d4d4;
                        line-height: 17px;
                        white-space: nowrap;
                    }
                </style>
                ${cells.map(([w, t]) => `<div style="width: ${w}px">${t}</div>`).join('')}<div style="flex: 1"></div>`;
        }
    }
    customElements.define('status-bar', StatusBar);

    // ---------- task bar ----------
    class TaskButton extends HTMLElement {
        constructor() {
            super();
            this.attachShadow({ mode: 'open' });
        }

        connectedCallback() {
            const name = this.getAttribute('icon');
            this.shadowRoot.innerHTML = `
                <style>
                    :host { display: block; width: 44px; padding: 4px 3px; box-sizing: border-box; }
                    button {
                        box-sizing: border-box;
                        display: flex;
                        flex-direction: column;
                        align-items: center;
                        width: 38px;
                        height: 39px;
                        padding: 7px 0 0;
                        border: 0;
                        border-radius: 4px;
                        background: none;
                    }
                    ui-icon { width: 24px; height: 24px; }
                    i { width: 6px; height: 3px; margin-top: 4px; border-radius: 2px; }
                    :host([run]) i { background: #8a8a8a; }
                    :host([on]) i { width: 16px; background: #0078d4; }
                    :host([on]) button { background: #f9f9f9; box-shadow: 0 0 1px 1px #e2e2e2; }
                </style>
                <button aria-label="${name}"><ui-icon name="${name}" box="24 24"></ui-icon><i></i></button>`;
        }
    }
    customElements.define('task-button', TaskButton);

    class TaskBar extends HTMLElement {
        constructor() {
            super();
            this.attachShadow({ mode: 'open' });
            this.shadowRoot.innerHTML = `
                <style>
                    :host {
                        display: grid;
                        grid-template-columns: 1fr auto 1fr;
                        height: 47px;
                        background: #eee;
                    }
                    .weather { display: flex; padding: 6px 0 0 20px; gap: 6px; }
                    .weather .pic { position: relative; width: 24px; }
                    .weather ui-icon { margin-top: 4px; width: 22px; height: 24px; }
                    .badge {
                        position: absolute;
                        top: -1px;
                        left: 10px;
                        width: 16px;
                        height: 16px;
                        border-radius: 50%;
                        background: #c42b1c;
                        color: #fff;
                        text-align: center;
                        font-size: 11px;
                    }
                    .dim { color: #666; }
                    .apps { display: flex; }
                    .search {
                        box-sizing: border-box;
                        display: flex;
                        align-items: center;
                        width: 220px;
                        height: 32px;
                        margin: 7px 2px 0 3px;
                        padding: 0 6px 0 10px;
                        border: 1px solid #d8d8d8;
                        border-radius: 16px;
                        background: #fafafa;
                    }
                    .search input {
                        flex: 1;
                        min-width: 0;
                        margin: 0 0 0 10px;
                        padding: 0;
                        border: 0;
                        outline: 0;
                        background: none;
                        font: 14px/20px "Noto Sans CJK KR", sans-serif;
                    }
                    .search input::placeholder { color: #5c5c5c; opacity: 1; }
                    .promo { width: 48px; height: 24px; }
                    .tray, .net { display: flex; justify-content: flex-end; }
                    .tray { padding-right: 19px; }
                    .net { margin-left: 6px; }
                    .tray button {
                        display: grid;
                        place-items: center;
                        height: 46px;
                        padding: 0;
                        border: 0;
                        background: none;
                        width: 25px;
                        font: 16px/24px "Noto Sans CJK KR", sans-serif;
                        color: #222;
                    }
                    .tray button.wide { width: 38px; }
                    .tray button.latin { font-size: 19px; font-weight: 300; }
                    .clock { width: 75px; padding-top: 6px; text-align: right; color: #222; }
                </style>
                <div class="weather">
                    <div class="pic"><ui-icon name="thermo" box="22 24"></ui-icon><div class="badge">7</div></div>
                    <div><div>기온 하강</div><div class="dim">일요일</div></div>
                </div>
                <div class="apps">
                    <task-button icon="win"></task-button>
                    <label class="search"><ui-icon name="search" box="24 24"></ui-icon><input placeholder="검색" aria-label="검색"><ui-icon class="promo" name="promo" box="48 24"></ui-icon></label>
                    <task-button icon="taskview"></task-button>
                    <task-button icon="copilot"></task-button>
                    <task-button icon="teams"></task-button>
                    <task-button icon="folder" run></task-button>
                    <task-button icon="chrome" run></task-button>
                    <task-button icon="cog"></task-button>
                    <task-button icon="creeper"></task-button>
                    <task-button icon="steam"></task-button>
                    <task-button icon="notepad" run></task-button>
                    <task-button icon="yinyang" on></task-button>
                    <task-button icon="photos" run></task-button>
                </div>
                <div class="tray">
                    <button aria-label="숨겨진 아이콘"><ui-icon name="up" box="24 24"></ui-icon></button>
                    <button class="wide latin">A</button>
                    <button class="wide">한</button>
                    <div class="net">
                        <button aria-label="네트워크"><ui-icon name="net" box="24 24"></ui-icon></button>
                        <button aria-label="소리"><ui-icon name="sound" box="24 24"></ui-icon></button>
                        <button aria-label="절전"><ui-icon name="leaf" box="24 24"></ui-icon></button>
                    </div>
                    <div class="clock"><div>오후 3:48</div><div>2025-05-13</div></div>
                </div>`;
        }
    }
    customElements.define('task-bar', TaskBar);
</script>
</body>
</html>
